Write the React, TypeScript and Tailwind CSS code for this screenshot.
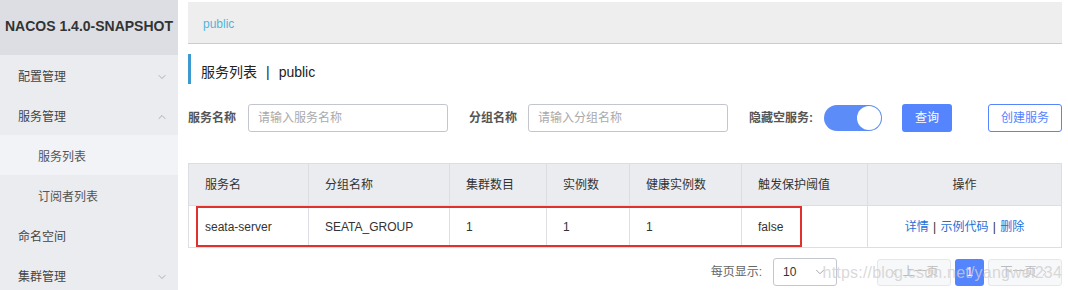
import { ChevronDown, ChevronUp, ChevronLeft, ChevronRight } from 'lucide-react'

const FONT = { fontFamily: '"Liberation Sans", "Noto Sans CJK SC", sans-serif' }

const MENU = [
  { label: '配置管理', level: 1, chevron: 'down' },
  { label: '服务管理', level: 1, chevron: 'up' },
  { label: '服务列表', level: 2, active: true },
  { label: '订阅者列表', level: 2 },
  { label: '命名空间', level: 1 },
  { label: '集群管理', level: 1, chevron: 'down' },
]

const COLS = [
  { title: '服务名', w: 'w-[120px]' },
  { title: '分组名称', w: 'w-[141px]' },
  { title: '集群数目', w: 'w-[97px]' },
  { title: '实例数', w: 'w-[83px]' },
  { title: '健康实例数', w: 'w-[112px]' },
  { title: '触发保护阈值', w: 'w-[126px]' },
  { title: '操作', w: '', center: true },
]

const ROW = ['seata-server', 'SEATA_GROUP', '1', '1', '1', 'false']

function Sidebar() {
  return (
    <aside className="w-[178px] shrink-0 bg-[#ebecf0] h-[290px]">
      <div className="h-[55px] bg-[#dcdee3] flex items-center justify-center pb-[3px] text-[14px] font-bold text-[#333]">
        NACOS 1.4.0-SNAPSHOT
      </div>
      {MENU.map((m) => (
        <div
          key={m.label}
          className={`h-[40px] flex items-center justify-between pt-[3px] pr-[10px] text-[12px] ${
            m.level === 2 ? 'pl-[38px] text-[#555]' : 'pl-[18px] text-[#444]'
          } ${m.active ? 'bg-[#f2f3f7]' : ''} ${m.label === '命名空间' ? 'text-[#222]' : ''}`}
        >
          <span>{m.label}</span>
          {m.chevron === 'down' && <ChevronDown className="size-[12px] text-[#888]" strokeWidth={1.25} />}
          {m.chevron === 'up' && <ChevronUp className="size-[12px] text-[#888]" strokeWidth={1.25} />}
        </div>
      ))}
    </aside>
  )
}

export default function App() {
  return (
    <div className="flex w-[1068px] h-[290px] overflow-hidden bg-white" style={FONT}>
      <Sidebar />
      <main className="flex-1 pl-[10px] pr-[6px] pt-[2px]">
        {/* breadcrumb bar */}
        <div className="h-[42px] bg-[#eeeeee] border-b border-[#cccccc] flex items-center pt-[3px] pl-[15px] text-[12px] text-[#4fb7db]">
          public
        </div>

        {/* title */}
        <div className="mt-[10px] h-[30px] border-l-[3px] border-[#3d9ad1] flex items-center pt-[7px] pl-[10px] text-[14px] text-[#222]">
          服务列表<span className="mx-[9px]">|</span>public
        </div>

        {/* filters */}
        <div className="mt-[20px] flex items-center h-[28px] text-[12px]">
          <span className="font-bold text-[#555] w-[60px]">服务名称</span>
          <div className="w-[200px] h-[28px] border border-[#c4c6cf] rounded-[3px] flex items-center pl-[9px] text-[#aaa]">
            请输入服务名称
          </div>
          <span className="font-bold text-[#555] ml-[21px] w-[59px]">分组名称</span>
          <div className="w-[200px] h-[28px] border border-[#c4c6cf] rounded-[3px] flex items-center pl-[9px] text-[#aaa]">
            请输入分组名称
          </div>
          <span className="font-bold text-[#555] ml-[21px] w-[75px]">隐藏空服务:</span>
          <div className="w-[58px] h-[26px] rounded-full bg-[#5b8cf7] flex items-center justify-end pr-[1px]">
            <div className="size-[24px] rounded-full bg-white" />
          </div>
          <div className="ml-[20px] w-[50px] h-[28px] rounded-[3px] bg-[#5584ff] text-white flex items-center justify-center">
            查询
          </div>
          <div className="ml-auto w-[74px] h-[28px] rounded-[3px] border border-[#5584ff] text-[#5584ff] flex items-center justify-center">
            创建服务
          </div>
        </div>

        {/* table */}
        <div className="relative mt-[31px]">
          <table className="w-full border-collapse text-[12px] table-fixed">
            <thead>
              <tr className="h-[42px] bg-[#ebecf0] text-[#333]">
                {COLS.map((c) => (
                  <th
                    key={c.title}
                    className={`${c.w} border border-[#dcdee3] font-normal px-[16px] ${c.center ? 'text-center' : 'text-left'}`}
                  >
                    {c.title}
                  </th>
                ))}
              </tr>
            </thead>
            <tbody>
              <tr className="h-[42px] text-[#333]">
                {ROW.map((v, i) => (
                  <td key={i} className="border border-[#dcdee3] px-[16px]">
                    {v}
                  </td>
                ))}
                <td className="border border-[#dcdee3] text-center text-[#1f6fd8]">
                  详情 <span className="text-[#333] mx-[1px]">|</span> 示例代码{' '}
                  <span className="text-[#333] mx-[1px]">|</span> 删除
                </td>
              </tr>
            </tbody>
          </table>
          {/* red annotation box */}
          <div className="absolute left-[8px] top-[43px] w-[606px] h-[41px] border-[2px] border-[#e0312f] pointer-events-none" />
        </div>

        {/* pagination */}
        <div className="relative mt-[10px] flex items-center justify-end h-[28px] text-[12px]">
          <span className="text-[#666] mr-[11px]">每页显示:</span>
          <div className="w-[64px] h-[28px] border border-[#c4c6cf] rounded-[3px] flex items-center justify-between px-[9px] text-[#333]">
            <span>10</span>
            <ChevronDown className="size-[14px] text-[#999]" strokeWidth={1.5} />
          </div>
          <div className="ml-[40px] w-[74px] h-[27px] border border-[#e6e7eb] bg-[#f7f8fa] rounded-[3px] flex items-center justify-center text-[#bbb]">
            <ChevronLeft className="size-[11px]" />
            <span className="ml-[2px]">上一页</span>
          </div>
          <div className="ml-[4px] w-[29px] h-[27px] bg-[#5584ff] rounded-[3px] flex items-center justify-center text-white">
            1
          </div>
          <div className="ml-[4px] w-[74px] h-[27px] border border-[#e6e7eb] bg-[#f7f8fa] rounded-[3px] flex items-center justify-center text-[#bbb]">
            <span className="mr-[2px]">下一页</span>
            <ChevronRight className="size-[11px]" />
          </div>
          {/* watermark */}
          <span className="absolute right-[0px] top-[3px] text-[16px] text-[#cfcfcf]/80 pointer-events-none tracking-[0.2px]">
            https://blog.csdn.net/yangwei234
          </span>
        </div>
      </main>
    </div>
  )
}
